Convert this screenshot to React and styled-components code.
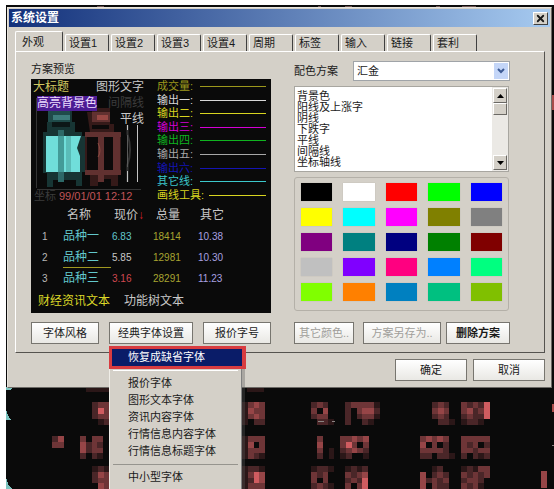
import React, { useState } from "react";
import styled, { createGlobalStyle } from "styled-components";
import { X } from "lucide-react";

const tabs = ["外观", "设置1", "设置2", "设置3", "设置4", "周期", "标签", "输入", "链接", "套利"];

const legend = [
  { label: "成交量:", color: "#9c981c" },
  { label: "输出一:", color: "#d8d8d8" },
  { label: "输出二:", color: "#d8d420" },
  { label: "输出三:", color: "#d400d4" },
  { label: "输出四:", color: "#10b420" },
  { label: "输出五:", color: "#a8a8a8" },
  { label: "输出六:", color: "#1414b4" },
  { label: "其它线:", color: "#3cc8cc" },
  { label: "画线工具:", color: "#d8d420" },
];

const quotes = [
  { no: 1, name: "品种一", price: "6.83", color: "#62c8cc", volume: "18414", other: "10.38" },
  { no: 2, name: "品种二", price: "5.85", color: "#c8c8c8", volume: "12981", other: "10.30", selected: true },
  { no: 3, name: "品种三", price: "3.16", color: "#d04850", volume: "28291", other: "11.23" },
];

const colorItems = ["背景色", "阳线及上涨字", "阴线", "下跌字", "平线", "间隔线", "坐标轴线"];

const swatches = [
  "#000000", "#ffffff", "#ff0000", "#00ff00", "#0000ff",
  "#ffff00", "#00ffff", "#ff00ff", "#808000", "#808080",
  "#800080", "#008080", "#000080", "#008000", "#800000",
  "#c0c0c0", "#8000ff", "#ff0080", "#0080ff", "#00ff80",
  "#80ff00", "#ff8000", "#0080c0", "#00c080", "#80c000",
];

const fontMenu = ["报价字体", "图形文本字体", "资讯内容字体", "行情信息内容字体", "行情信息标题字体"];

// shades of the blurred quote digits, by the digit used in the rows below
const shades = ["#0a0a0a", "#2b1718", "#4a2628", "#6e3537", "#964547", "#d05c60"];

const blocks = [
  { x: 86, y: 386, rows: ["1111"] },
  { x: 247, y: 386, rows: ["111"] },
  { x: 92, y: 402, rows: ["233", "253", "233", ".12"] },
  { x: 52, y: 436, rows: ["24", "33"] },
  { x: 80, y: 436, rows: ["3.33", "4232", "4233", "2.21"] },
  { x: 92, y: 466, rows: ["121", "243", "233", ".43"] },
  { x: 242, y: 402, rows: ["1343", "1433", "1343", "1.22"] },
  { x: 242, y: 436, rows: ["1333", "1403", "1333", "1321"] },
  { x: 242, y: 466, rows: ["1221", "1354", "1254", "1333"] },
  { x: 311, y: 402, rows: ["232", "304", "233", ".221"] },
  { x: 345, y: 402, rows: ["233331", "203442", "2.2331", "2..21"] },
  { x: 317, y: 436, rows: ["3", "4", "3.1", "2.1"] },
  { x: 340, y: 436, rows: ["33434", "35303", "23432", "12..1"] },
  { x: 311, y: 466, rows: ["1221", "323", "303", "2321"] },
  { x: 345, y: 466, rows: ["1212", "3234", "2325", "3.35"] },
  { x: 432, y: 402, rows: ["232", "343", "232", ".221"] },
  { x: 461, y: 402, rows: ["32325", "34235", "23225", "1221"] },
  { x: 420, y: 436, rows: ["34343", "40302", "33332", "22.221"] },
  { x: 461, y: 436, rows: ["33333", "32302", "33233", "2.212"] },
  { x: 420, y: 466, rows: ["..12", "4.232", "42323", "4.322"] },
  { x: 461, y: 466, rows: ["12133", "32323", "2332", "3231"] },
  { x: 541, y: 471, rows: ["4", "4", "4"] },
];

const GlobalStyle = createGlobalStyle`
  * {
    box-sizing: border-box;
  }

  body {
    margin: 0;
    background: #ffffff;
    color: #1a1a1a;
    font-family: "Liberation Sans", "Noto Sans CJK SC", sans-serif;
    font-size: 11px;
    line-height: 16px;
  }

  button,
  select {
    font: inherit;
    color: inherit;
    padding: 0;
    border-radius: 0;
  }
`;

const Page = styled.div`
  padding: 5px 0 0 6px;
`;

const Screen = styled.div`
  position: relative;
  min-height: calc(100vh - 5px);
  padding: 2px 2px 0 1px;
  overflow: hidden;
  background: #0a0a0a;
`;

const Backdrop = styled.svg`
  position: absolute;
  top: 0;
  left: 0;
`;

const Dialog = styled.div`
  position: relative;
  border: 1px solid;
  border-color: #e8e4dc #6c6a66 #6c6a66 #e8e4dc;
  background: #d4d0c8;
`;

const TitleBar = styled.div`
  display: flex;
  align-items: center;
  justify-content: space-between;
  height: 18px;
  margin: 1px 1px 4px;
  padding: 0 2px;
  background: linear-gradient(to right, #12307a, #a6caf0);
`;

const Title = styled.h1`
  margin: 0;
  font-size: 12px;
  font-weight: bold;
  color: #ffffff;
`;

const CloseButton = styled.button`
  display: flex;
  align-items: center;
  justify-content: center;
  width: 15px;
  height: 13px;
  border: 1px solid;
  border-color: #ffffff #404040 #404040 #ffffff;
  background: #d4d0c8;
`;

const TabList = styled.div`
  display: flex;
  align-items: flex-end;
  gap: 2px;
  padding: 0 7px;
`;

const Tab = styled.button`
  width: ${({ $active }) => ($active ? "48px" : "44px")};
  height: ${({ $active }) => ($active ? "20px" : "17px")};
  padding-left: ${({ $active }) => ($active ? "6px" : "3px")};
  border: 1px solid #ffffff;
  border-right: 1px solid #404040;
  border-bottom: 0;
  border-radius: 2px 2px 0 0;
  background: #d4d0c8;
  text-align: left;
`;

const Panel = styled.div`
  display: grid;
  grid-template-columns: minmax(0, 10fr) minmax(0, 9fr);
  gap: 23px;
  margin: 0 6px 6px 7px;
  padding: 9px 34px 8px 15px;
  border: 1px solid;
  border-color: #ffffff #55534f #55534f #ffffff;
`;

const Column = styled.div`
  display: flex;
  flex-direction: column;
`;

const SectionLabel = styled.div`
  height: 18px;
`;

const Preview = styled.div`
  height: 234px;
  background: #0a0a0a;
  color: #c8c8c8;
  font-size: 12px;
`;

const PreviewTop = styled.div`
  display: grid;
  grid-template-columns: 125px minmax(0, 1fr);
  height: 125px;
`;

const ChartArea = styled.div`
  position: relative;
  display: flex;
  flex-direction: column;
`;

const Chart = styled.svg`
  position: absolute;
  inset: 0;
`;

const ChartRow = styled.div`
  position: relative;
  display: flex;
  align-items: center;
  justify-content: space-between;
  height: 16px;
  padding: 0 12px 0 2px;
`;

const ChartTitle = styled.span`
  color: #d0c860;
`;

const Highlight = styled.span`
  margin-left: 4px;
  line-height: 15px;
  background: #4c1c94;
  color: #ecdcff;
`;

const Dim = styled.span`
  color: #3c3c3c;
`;

const FlatLabel = styled.span`
  margin-left: auto;
`;

const TimeRow = styled.div`
  position: relative;
  display: flex;
  gap: 3px;
  margin-top: auto;
  padding-left: 3px;
  font-size: 11px;
`;

const Time = styled.span`
  color: #c05458;
`;

const Legend = styled.ul`
  display: grid;
  grid-auto-rows: 1fr;
  margin: 0;
  padding: 1px 5px 2px 1px;
  list-style: none;
  font-size: 11px;
`;

const LegendItem = styled.li`
  display: flex;
  align-items: center;
  gap: 5px;
  min-height: 0;
  line-height: 13px;
  color: ${({ $color }) => $color};

  &::after {
    content: "";
    flex: 1;
    height: 1px;
    background: currentColor;
  }
`;

const LegendLabel = styled.span`
  min-width: 38px;
`;

const QuoteTable = styled.table`
  width: 100%;
  table-layout: fixed;
  border-collapse: collapse;
`;

const Th = styled.th`
  width: ${({ $width }) => $width};
  height: 22px;
  padding: 0 0 0 ${({ $indent }) => $indent || "0"};
  font-weight: normal;
  text-align: left;
`;

const Arrow = styled.span`
  color: #d02028;
`;

const Td = styled.td`
  height: 21px;
  padding: 0 0 0 ${({ $indent }) => $indent || "0"};
  font-size: 10px;
  text-align: left;
  color: ${({ $color }) => $color || "#b8b8b8"};
`;

const Name = styled.span`
  display: block;
  width: 48px;
  height: 21px;
  line-height: 20px;
  border-bottom: 1px solid ${({ $selected }) => ($selected ? "#a09820" : "transparent")};
  font-size: 12px;
  color: #62c8cc;
`;

const PreviewFooter = styled.div`
  display: flex;
  gap: 14px;
  padding: 4px 7px;
`;

const NewsText = styled.span`
  color: #dcd828;
`;

const ButtonRow = styled.div`
  display: flex;
  justify-content: space-between;
  margin-top: auto;
  padding-top: 9px;
`;

const ButtonPair = styled.div`
  display: flex;
  gap: 5px;
`;

const Button = styled.button`
  width: ${({ $width }) => $width};
  height: 22px;
  overflow: hidden;
  border: 1px solid #77756f;
  background: linear-gradient(#ffffff, #e9e8e4);
  font-weight: ${({ $strong }) => ($strong ? "bold" : "normal")};
  white-space: nowrap;

  &:disabled {
    color: #a09e9a;
  }
`;

const MenuAnchor = styled.div`
  position: relative;
`;

const Menu = styled.ul`
  position: absolute;
  z-index: 1;
  top: calc(100% + 2px);
  left: 0;
  width: 133px;
  margin: 0;
  padding: 0 0 24px;
  border-left: 1px solid #f0eee8;
  border-right: 1px solid #808080;
  list-style: none;
  background: #d4d0c8;
  box-shadow: 3px 2px 0 rgba(90, 90, 90, 0.35);
`;

const MenuItem = styled.button`
  display: block;
  width: 100%;
  height: 17px;
  padding-left: 18px;
  border: 0;
  background: none;
  line-height: 17px;
  text-align: left;
`;

const ActiveMenuItem = styled(MenuItem)`
  width: calc(100% + 6px);
  height: 23px;
  margin-left: -1px;
  padding-left: 16px;
  border: 3px solid #d83c40;
  border-right-width: 4px;
  background: #0a1c68;
  color: #ffffff;
`;

const Separator = styled.li`
  height: 1px;
  margin: ${({ $light }) => ($light ? "1px 3px 4px" : "4px 3px")};
  background: ${({ $light }) => ($light ? "#ffffff" : "#96948e")};
`;

const SchemeRow = styled.label`
  display: flex;
  align-items: center;
  justify-content: space-between;
  margin-bottom: 5px;
`;

const SelectBox = styled.span`
  display: grid;
  grid-template-columns: 1fr 16px;
  width: 157px;
  height: 20px;
  border: 1px solid #a0a4a8;
  background: #ffffff;
`;

const Select = styled.select`
  grid-area: 1 / 1 / 2 / 3;
  padding-left: 3px;
  border: 0;
  background: none;
  appearance: none;
`;

const SelectArrow = styled.span`
  display: flex;
  grid-area: 1 / 2;
  align-items: center;
  justify-content: center;
  margin: 1px;
  background: #c4d6f8;
  pointer-events: none;
`;

const ListFrame = styled.div`
  display: grid;
  grid-template-columns: 1fr 16px;
  height: 86px;
  margin-right: 1px;
  margin-bottom: 5px;
  border: 1px solid #a8a6a0;
  background: #ffffff;
`;

const ListBox = styled.select`
  height: 84px;
  overflow: hidden;
  border: 0;
  outline: 0;
  background: none;

  option {
    height: 11px;
    min-height: 0;
    padding: 0 2px;
    line-height: 11px;
  }
`;

const ScrollBar = styled.div`
  display: flex;
  flex-direction: column;
  padding: 1px;
  background: #ebe9e5;
`;

const ScrollButton = styled.button`
  display: flex;
  align-items: center;
  justify-content: center;
  height: 15px;
  border: 1px solid;
  border-color: #ffffff #6a6864 #6a6864 #ffffff;
  background: #d4d0c8;
`;

const Thumb = styled.div`
  height: 12px;
  margin-bottom: auto;
  border: 1px solid;
  border-color: #ffffff #6a6864 #6a6864 #ffffff;
  background: #d4d0c8;
`;

const Palette = styled.div`
  display: grid;
  grid-template-columns: repeat(5, 1fr);
  grid-auto-rows: 18px;
  gap: 7px 11px;
  height: 134px;
  margin-right: 1px;
  padding: 5px 6px;
  border: 1px solid #b4b0a8;
  border-radius: 3px;
`;

const Swatch = styled.button`
  border: 0;
  background: ${({ $color }) => $color};
  box-shadow: 0 0 1px #b0aca4;
`;

const DialogFooter = styled.div`
  display: flex;
  justify-content: flex-end;
  gap: 6px;
  padding: 0 6px 6px;
`;

const Terminal = () => (
  <Backdrop width="548" height="484" viewBox="6 5 548 484" shapeRendering="crispEdges" aria-hidden="true">
    {blocks.map((block) =>
      block.rows.map((row, r) =>
        row.split("").map((shade, c) =>
          shade === "." ? null : (
            <rect
              key={`${block.x}-${block.y}-${r}-${c}`}
              x={block.x + c * 5.8}
              y={block.y + r * 5.8}
              width="5.8"
              height="5.8"
              fill={shades[shade]}
            />
          )
        )
      )
    )}
    <path d="M6 387h8l-4 3H6zM6 408q1 9 6 12H6zM6 476q1 9 6 13H6z" fill="#7cc4c0" />
    <path d="M318 421h6M332 421h3M552 445h2" stroke="#8a8482" />
    <path d="M553 404v8M553 95v15" stroke="#a84c4a" strokeWidth="2" />
    <path d="M97 6h7M318 6h3M345 6h7M436 6h4M462 6h14" stroke="#6c5452" />
  </Backdrop>
);

const CandleChart = () => (
  <Chart viewBox="31 79 125 125" aria-hidden="true">
    <path d="M36.5 98v90M37 189.500h104" stroke="#343434" fill="none" />
    <path d="M48 110h24v12h3v10h7v4h4v36h-4v14h-6v-6H53v7h-6v-14h-4v-41h4v-10h3z" fill="#173534" />
    <path d="M48 111h22v11H48z" fill="#1f4b4a" />
    <path d="M53 115h17v5H53z" fill="#3d7c7b" />
    <path d="M52 122h18v5H52z" fill="#0c1717" />
    <path d="M58 130h6v52h-6z" fill="#2d6867" />
    <path d="M46 136h12v36H46zM64 136h17l-4 12 3 8v16H64z" fill="#70deda" />
    <path d="M58 136h6v36h-6z" fill="#439b98" />
    <path d="M66 136h5v36h-5z" fill="#5abcb8" />
    <path d="M87 112h5v-4h18v16h4v8h7v40h-3v14h-7v-7H98v7h-8v-14h-5v-40h5z" fill="#351a19" />
    <path d="M92 112h18v10H92zM85 132h36v5H85zM85 170h36v5H85zM98 132h6v50h-6zM112 132h8v43h-8z" fill="#613130" />
    <path d="M97 115h11v5H97z" fill="#984844" />
    <path d="M92 125h17v4H92zM87 137h11v33H87zM104 137h9v33h-9z" fill="#0c0a0a" />
    <path d="M98 143q4 8 0 14" stroke="#8a4a40" fill="none" />
    <path d="M127.500 125v9q5 16 0 31v17" stroke="#343434" strokeWidth="2" fill="none" />
    <path d="M127.500 125v5M127.500 171v11M137.500 125v57" stroke="#c4c4c4" />
    <path d="M127.500 135v32" stroke="#5a5a5a" />
  </Chart>
);

const App = () => {
  const [tab, setTab] = useState("外观");

  return (
    <Page>
      <GlobalStyle />
      <Screen>
        <Terminal />
        <Dialog role="dialog" aria-labelledby="title">
          <TitleBar>
            <Title id="title">系统设置</Title>
            <CloseButton aria-label="关闭">
              <X size={11} strokeWidth={4} />
            </CloseButton>
          </TitleBar>

          <TabList role="tablist">
            {tabs.map((name) => (
              <Tab
                key={name}
                role="tab"
                aria-selected={name === tab}
                $active={name === tab}
                onClick={() => setTab(name)}
              >
                {name}
              </Tab>
            ))}
          </TabList>

          <Panel role="tabpanel">
            <Column>
              <SectionLabel>方案预览</SectionLabel>
              <Preview>
                <PreviewTop>
                  <ChartArea>
                    <CandleChart />
                    <ChartRow>
                      <ChartTitle>大标题</ChartTitle>
                      <span>图形文字</span>
                    </ChartRow>
                    <ChartRow>
                      <Highlight>高亮背景色</Highlight>
                      <Dim>间隔线</Dim>
                    </ChartRow>
                    <ChartRow>
                      <FlatLabel>平线</FlatLabel>
                    </ChartRow>
                    <TimeRow>
                      <Dim>坐标</Dim>
                      <Time>99/01/01 12:12</Time>
                    </TimeRow>
                  </ChartArea>
                  <Legend>
                    {legend.map((item) => (
                      <LegendItem key={item.label} $color={item.color}>
                        <LegendLabel>{item.label}</LegendLabel>
                      </LegendItem>
                    ))}
                  </Legend>
                </PreviewTop>
                <QuoteTable>
                  <thead>
                    <tr>
                      <Th $width="32px" />
                      <Th $width="49px" $indent="4px">名称</Th>
                      <Th $width="38px" $indent="2px">
                        现价<Arrow>↓</Arrow>
                      </Th>
                      <Th $width="48px" $indent="6px">总量</Th>
                      <Th $indent="2px">其它</Th>
                    </tr>
                  </thead>
                  <tbody>
                    {quotes.map((quote) => (
                      <tr key={quote.no}>
                        <Td $indent="11px">{quote.no}</Td>
                        <Td>
                          <Name $selected={quote.selected}>{quote.name}</Name>
                        </Td>
                        <Td $color={quote.color}>{quote.price}</Td>
                        <Td $color="#a8a430" $indent="3px">{quote.volume}</Td>
                        <Td $color="#a8a0e0">{quote.other}</Td>
                      </tr>
                    ))}
                  </tbody>
                </QuoteTable>
                <PreviewFooter>
                  <NewsText>财经资讯文本</NewsText>
                  <span>功能树文本</span>
                </PreviewFooter>
              </Preview>
              <ButtonRow>
                <Button $width="68px">字体风格</Button>
                <MenuAnchor>
                  <Button $width="84px" aria-haspopup="menu" aria-expanded="true">
                    经典字体设置
                  </Button>
                  <Menu role="menu">
                    <li>
                      <ActiveMenuItem role="menuitem">恢复成缺省字体</ActiveMenuItem>
                    </li>
                    <Separator $light />
                    {fontMenu.map((item) => (
                      <li key={item}>
                        <MenuItem role="menuitem">{item}</MenuItem>
                      </li>
                    ))}
                    <Separator />
                    <li>
                      <MenuItem role="menuitem">中小型字体</MenuItem>
                    </li>
                  </Menu>
                </MenuAnchor>
                <Button $width="68px">报价字号</Button>
              </ButtonRow>
            </Column>

            <Column>
              <SchemeRow>
                配色方案
                <SelectBox>
                  <Select defaultValue="汇金">
                    <option>汇金</option>
                  </Select>
                  <SelectArrow>
                    <svg width="8" height="6" viewBox="0 0 8 6">
                      <path d="M1 1l3 3 3-3" fill="none" stroke="#3c5a94" strokeWidth="2" />
                    </svg>
                  </SelectArrow>
                </SelectBox>
              </SchemeRow>
              <ListFrame>
                <ListBox size={7} aria-label="颜色项目">
                  {colorItems.map((item) => (
                    <option key={item}>{item}</option>
                  ))}
                </ListBox>
                <ScrollBar>
                  <ScrollButton aria-label="向上">
                    <svg width="7" height="4" viewBox="0 0 7 4">
                      <path d="M0 4l3.500-4L7 4z" />
                    </svg>
                  </ScrollButton>
                  <Thumb />
                  <ScrollButton aria-label="向下">
                    <svg width="7" height="4" viewBox="0 0 7 4">
                      <path d="M0 0l3.500 4L7 0z" />
                    </svg>
                  </ScrollButton>
                </ScrollBar>
              </ListFrame>
              <Palette>
                {swatches.map((color) => (
                  <Swatch key={color} $color={color} aria-label={color} />
                ))}
              </Palette>
              <ButtonRow>
                <Button $width="60px" disabled>其它颜色..</Button>
                <ButtonPair>
                  <Button $width="78px" disabled>方案另存为..</Button>
                  <Button $width="64px" $strong>删除方案</Button>
                </ButtonPair>
              </ButtonRow>
            </Column>
          </Panel>

          <DialogFooter>
            <Button $width="72px">确定</Button>
            <Button $width="72px">取消</Button>
          </DialogFooter>
        </Dialog>
      </Screen>
    </Page>
  );
};

export default App;
